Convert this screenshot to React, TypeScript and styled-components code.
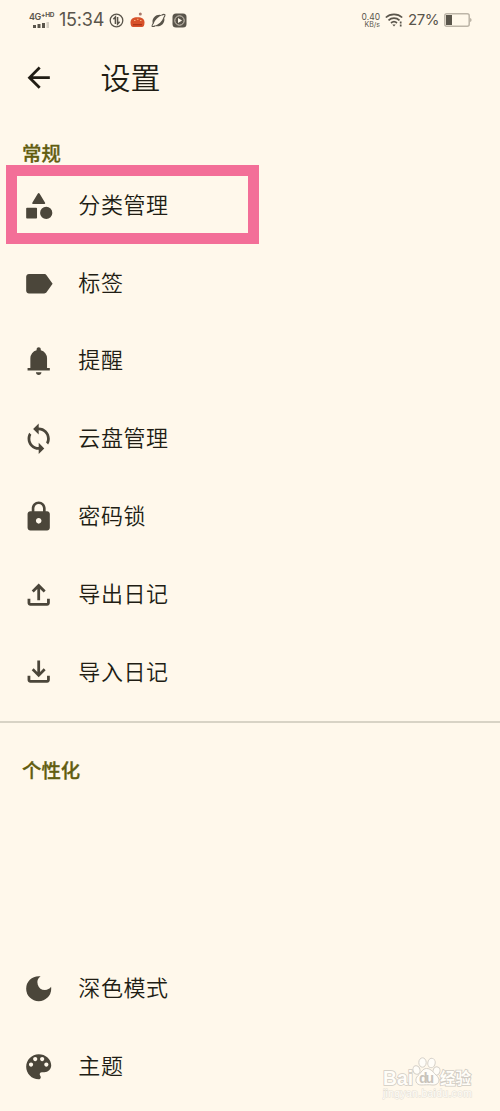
import React from 'react';
import styled, { createGlobalStyle } from 'styled-components';

const GlobalStyle = createGlobalStyle`
  * { box-sizing: border-box; }
  body { margin: 0; background: #fff8eb; }
`;

const Screen = styled.main`
  position: relative;
  width: 500px;
  height: 1111px;
  overflow: hidden;
  background: #fff8eb;
  color: #211d14;
  font-family: 'Noto Sans CJK SC', sans-serif;
  display: flex;
  flex-direction: column;
`;

const StatusBar = styled.header`
  height: 40px;
  flex: none;
  padding: 0 28px 0 28px;
  display: flex;
  justify-content: space-between;
  align-items: center;
  color: #5a554b;
  font-family: Inter, sans-serif;
`;

const StatusGroup = styled.div<{ $gap: number }>`
  display: flex;
  align-items: center;
  gap: ${(p) => p.$gap}px;
`;

const Signal = styled.div`
  width: 27px;
  display: flex;
  flex-direction: column;
  align-items: center;
  gap: 1px;
  svg { display: block; }
`;

const Network = styled.span`
  font-size: 9px;
  line-height: 8px;
  font-weight: 600;
  letter-spacing: -0.3px;
  white-space: nowrap;
  display: flex;
  small { font-size: 6.5px; line-height: 5px; font-weight: 700; }
`;

const Clock = styled.time`
  width: 46px;
  font-size: 18px;
  line-height: 20px;
  letter-spacing: -0.2px;
  white-space: nowrap;
`;

const Speed = styled.div`
  display: flex;
  flex-direction: column;
  align-items: flex-end;
  font-size: 8.5px;
  line-height: 8px;
  span + span { font-size: 7px; line-height: 7px; }
`;

const Percent = styled.span`
  font-size: 15px;
  line-height: 20px;
  width: 31px;
  letter-spacing: -0.5px;
`;

const AppBar = styled.div`
  height: 76px;
  flex: none;
  padding: 0 22px;
  display: flex;
  align-items: center;
  gap: 45px;
`;

const Title = styled.h1`
  margin: 0;
  padding-bottom: 5px;
  font-size: 30px;
  line-height: 40px;
  font-weight: 350;
`;

const SectionTitle = styled.h2<{ $top: number; $bottom: number }>`
  margin: ${(p) => p.$top}px 0 ${(p) => p.$bottom}px 22px;
  flex: none;
  font-size: 19.4px;
  line-height: 28px;
  font-weight: 500;
  color: #625d10;
  -webkit-text-stroke: 0.3px #625d10;
`;

const List = styled.ul`
  list-style: none;
  margin: 0;
  padding: 0;
  flex: none;
`;

const Row = styled.li`
  position: relative;
  height: 77.8px;
  padding-left: 22.4px;
  display: flex;
  align-items: center;
  gap: 22.5px;
`;

const Label = styled.span`
  padding-bottom: 5px;
  font-size: 22px;
  line-height: 32px;
  letter-spacing: 0.6px;
  font-weight: 350;
`;

const Highlight = styled.div`
  position: absolute;
  left: 6px;
  top: -1.5px;
  width: 253px;
  height: 79px;
  border: 11px solid #f36f98;
`;

const Divider = styled.hr`
  margin: 10px 0 0;
  flex: none;
  border: 0;
  height: 2px;
  width: 100%;
  background: #d8d3c5;
`;

const Icon = styled.svg`
  display: block;
  flex: none;
  width: 33.4px;
  height: 33.4px;
  fill: #4b463a;
`;

const Watermark = styled.div`
  position: absolute;
  left: 382px;
  top: 1056px;
  width: 94px;
  height: 46px;
  svg { display: block; }
`;

const paths = {
  category: 'M11.3 3.5q.7-1.1 1.4 0l3.9 6.4q.4.9-.6.9H8q-1 0-.6-.9zM3.6 13.4h6.6q.6 0 .6.6v6.6q0 .6-.6.6H3.6q-.6 0-.6-.6V14q0-.6.6-.6zM17.4 12.8a4.4 4.4 0 1 0 0 8.8 4.4 4.4 0 1 0 0-8.8z',
  label: 'M17.63 5.84C17.27 5.33 16.67 5 16 5L5 5.01C3.9 5.01 3 5.9 3 7v10c0 1.1.9 1.99 2 1.99L16 19c.67 0 1.27-.33 1.63-.84L22 12l-4.37-6.16z',
  bell: 'M4 19v-1.700h2v-7q0-2.075 1.25-3.688T10.5 4.5v-.7q0-.625.438-1.062T12 2.300t1.063.438T13.5 3.800v.7q2 .5 3.25 2.113T18 10.300v7h2V19zm8 3.300q-.825 0-1.412-.587T10 20.300h4q0 .825-.587 1.413T12 22.300z',
  sync: 'M12 4V1L8 5l4 4V6c3.31 0 6 2.69 6 6 0 1.01-.25 1.97-.7 2.8l1.46 1.46C19.54 15.03 20 13.57 20 12c0-4.42-3.58-8-8-8zm0 14c-3.31 0-6-2.69-6-6 0-1.01.25-1.97.7-2.8L5.24 7.74C4.46 8.97 4 10.43 4 12c0 4.42 3.58 8 8 8v3l4-4-4-4v3z',
  lock: 'M18 8h-1V6c0-2.76-2.24-5-5-5S7 3.24 7 6v2H6c-1.1 0-2 .9-2 2v10c0 1.1.9 2 2 2h12c1.1 0 2-.9 2-2V10c0-1.1-.9-2-2-2zm-6 9c-1.1 0-2-.9-2-2s.9-2 2-2 2 .9 2 2-.9 2-2 2zm3.1-9H8.9V6c0-1.71 1.39-3.1 3.1-3.1 1.71 0 3.1 1.39 3.1 3.1v2z',
  upload: 'M11 16V7.85l-2.6 2.6L7 9l5-5 5 5-1.4 1.45-2.6-2.6V16zm-5 4q-.825 0-1.412-.587T4 18v-3h2v3h12v-3h2v3q0 .825-.587 1.413T18 20z',
  download: 'M12 16l-5-5 1.4-1.45 2.6 2.6V4h2v8.15l2.6-2.6L17 11zm-6 4q-.825 0-1.412-.587T4 18v-3h2v3h12v-3h2v3q0 .825-.587 1.413T18 20z',
  moon: 'M12 3a9 9 0 1 0 9 9c0-.46-.04-.92-.1-1.36a5.389 5.389 0 0 1-4.4 2.26 5.403 5.403 0 0 1-3.14-9.8c-.44-.06-.9-.1-1.36-.1z',
  palette: 'M12 3c-4.97 0-9 4.03-9 9s4.03 9 9 9c.83 0 1.5-.67 1.5-1.5 0-.39-.15-.74-.39-1.01-.23-.26-.38-.61-.38-.99 0-.83.67-1.5 1.5-1.5H16c2.76 0 5-2.24 5-5 0-4.42-4.03-8-9-8zm-5.5 9c-.83 0-1.5-.67-1.5-1.5S5.67 9 6.5 9 8 9.67 8 10.5 7.33 12 6.5 12zm3-4C8.67 8 8 7.33 8 6.5S8.67 5 9.5 5s1.5.67 1.5 1.5S10.33 8 9.5 8zm5 0c-.83 0-1.5-.67-1.5-1.5S13.67 5 14.5 5s1.5.67 1.5 1.5S15.33 8 14.5 8zm3 4c-.83 0-1.5-.67-1.5-1.5S16.67 9 17.5 9s1.5.67 1.5 1.5-.67 1.5-1.5 1.5z',
  back: 'M20 11H7.83l5.59-5.59L12 4l-8 8 8 8 1.41-1.41L7.83 13H20v-2z',
};

type IconName = keyof typeof paths;

interface Item {
  icon: IconName;
  label: string;
  highlighted?: boolean;
}

const general: Item[] = [
  { icon: 'category', label: '分类管理', highlighted: true },
  { icon: 'label', label: '标签' },
  { icon: 'bell', label: '提醒' },
  { icon: 'sync', label: '云盘管理' },
  { icon: 'lock', label: '密码锁' },
  { icon: 'upload', label: '导出日记' },
  { icon: 'download', label: '导入日记' },
];

const personal: Item[] = [
  { icon: 'moon', label: '深色模式' },
  { icon: 'palette', label: '主题' },
];

const Glyph = ({ name, color }: { name: IconName; color?: string }) => (
  <Icon viewBox="0 0 24 24">
    <path d={paths[name]} fill={color} />
  </Icon>
);

const Items = ({ items }: { items: Item[] }) => (
  <List>
    {items.map((item) => (
      <Row key={item.label}>
        <Glyph name={item.icon} />
        <Label>{item.label}</Label>
        {item.highlighted && <Highlight />}
      </Row>
    ))}
  </List>
);

const Notifications = () => (
  <StatusGroup $gap={6}>
    <svg width="15" height="15" viewBox="0 0 15 15" fill="none" stroke="#5a554b" strokeWidth="1.3">
      <circle cx="7.5" cy="7.5" r="6.3" />
      <path d="M4.4 6.200 6.400 4v7M8.600 4v7l2-2.200" strokeWidth="1.500" />
    </svg>
    <svg width="15" height="16" viewBox="0 0 15 16">
      <circle cx="10.3" cy="2" r="1.5" fill="#a9776a" />
      <path d="M.5 10.5C.5 7 3 5.3 7.5 5.3s7 1.700 7 5.200c0 3-1 4.500-2.500 4.500H3C1.500 15 .5 13.500.5 10.500z" fill="#d8512a" />
      <path d="M4 8.500h1.500M7 7.300h1.500M10 8.500h1.500" stroke="#f6b27d" />
      <path d="M3 12.700h9" stroke="#a93417" strokeWidth="1.200" />
    </svg>
    <svg width="15" height="15" viewBox="0 0 15 15" fill="#5a554b">
      <path d="M1.500 9C1.300 5 4.500 1.700 8.500 1.700c1 0 1.800.2 2.500.5C7.500 3.500 4 6.500 2.300 11.200 1.800 10.500 1.600 9.800 1.500 9zM13.400 6c.3 4-2.800 7.300-6.800 7.300-1 0-1.900-.2-2.600-.6C7.500 11.500 11 8.500 12.700 3.900c.4.600.7 1.300.7 2.100z" />
      <path d="M10.500 2.200c1.500-.8 2.800-1 3.300-.5.400.5 0 1.500-1 3M4.400 12.700c-1.500.8-2.700 1.100-3.200.6-.4-.5.100-1.600 1.100-3" fill="none" stroke="#5a554b" strokeWidth="1.100" />
    </svg>
    <svg width="15" height="15" viewBox="0 0 15 15">
      <rect x=".5" y=".5" width="14" height="14" rx="3.500" fill="#5a554b" />
      <circle cx="7.500" cy="7.500" r="4.700" fill="none" stroke="#d5cdbf" />
      <path d="M6 4.900v5.200l4.100-2.600z" fill="#fff8eb" />
    </svg>
  </StatusGroup>
);

const BaiduMark = () => (
  <Watermark>
    <svg width="94" height="46" viewBox="0 0 94 46">
      <g fill="#fffdf8" stroke="#d5d0c8" strokeWidth="1">
        <ellipse cx="34.500" cy="14" rx="3.500" ry="4.300" transform="rotate(-15 34.500 14)" />
        <ellipse cx="40.500" cy="6.500" rx="3.700" ry="4.700" />
        <ellipse cx="49.500" cy="7" rx="3.700" ry="4.700" transform="rotate(10 49.500 7)" />
        <ellipse cx="54.500" cy="15" rx="3.500" ry="4.200" transform="rotate(15 54.500 15)" />
        <path d="M44.500 12.500c-4 0-5 4-8.500 7-4 4-2 9.500 3 9.500 3 0 8-.5 11 0 6 .8 9-4.500 5.500-8.500-4-3.500-6-8-11-8z" />
      </g>
      <g fill="#fffdf8" stroke="#d0cbc3" strokeWidth="1.600" paintOrder="stroke" fontFamily="Liberation Sans, sans-serif" fontWeight="700">
        <text x="1" y="28.500" fontSize="20" textLength="30" lengthAdjust="spacingAndGlyphs">Bai</text>
        <text x="37" y="27" fontSize="14" fill="#c9c4bc" stroke="none" textLength="15">du</text>
        <text x="58" y="27.500" fontSize="15.500" fontFamily="Noto Sans CJK SC, sans-serif" textLength="31">经验</text>
        <text x="1" y="40.500" fontSize="10.500" stroke="#e4dfd5" strokeWidth="1" fontWeight="400" textLength="89">jingyan.baidu.com</text>
      </g>
    </svg>
  </Watermark>
);

export default function App() {
  return (
    <Screen>
      <GlobalStyle />
      <StatusBar>
        <StatusGroup $gap={4}>
          <Signal>
            <Network>4G<small>+HD</small></Network>
            <svg width="17" height="6" viewBox="0 0 17 6" fill="#5a554b">
              <path d="M0 3h3v3H0zM4.500 2h3v4h-3zM9 1h3v5H9z" />
              <path d="M13.500 0h2.500v6h-2.500z" opacity=".25" />
            </svg>
          </Signal>
          <Clock>15:34</Clock>
          <Notifications />
        </StatusGroup>
        <StatusGroup $gap={5}>
          <Speed>
            <span>0.40</span>
            <span>KB/s</span>
          </Speed>
          <svg width="18" height="14" viewBox="0 0 18 14" fill="none" stroke="#5a554b" strokeWidth="1.700">
            <path d="M.8 4.500c4.600-4.300 11.800-4.300 16.400 0M3.500 7.300c3.100-2.900 7.900-2.900 11 0M6 10c1.700-1.500 4.300-1.500 6 0" />
            <path d="M7.300 11.500h3.400L9 13.500z" fill="#5a554b" stroke="none" />
            <path d="M15.700 8.500v2M15.700 11.500v2" />
          </svg>
          <Percent>27%</Percent>
          <svg width="28" height="14" viewBox="0 0 28 14">
            <rect x=".8" y=".8" width="24.400" height="12.400" rx="2" fill="none" stroke="#bdb5a8" strokeWidth="1.500" />
            <path d="M25.500 4.500 27.500 6v2l-2 1.500z" fill="#bdb5a8" />
            <rect x="2" y="2" width="6" height="10" fill="#5a554b" />
          </svg>
        </StatusGroup>
      </StatusBar>
      <AppBar>
        <Glyph name="back" color="#211d14" />
        <Title>设置</Title>
      </AppBar>
      <SectionTitle $top={22.5} $bottom={0}>常规</SectionTitle>
      <Items items={general} />
      <Divider />
      <SectionTitle $top={32.5} $bottom={166}>个性化</SectionTitle>
      <Items items={personal} />
      <BaiduMark />
    </Screen>
  );
}
